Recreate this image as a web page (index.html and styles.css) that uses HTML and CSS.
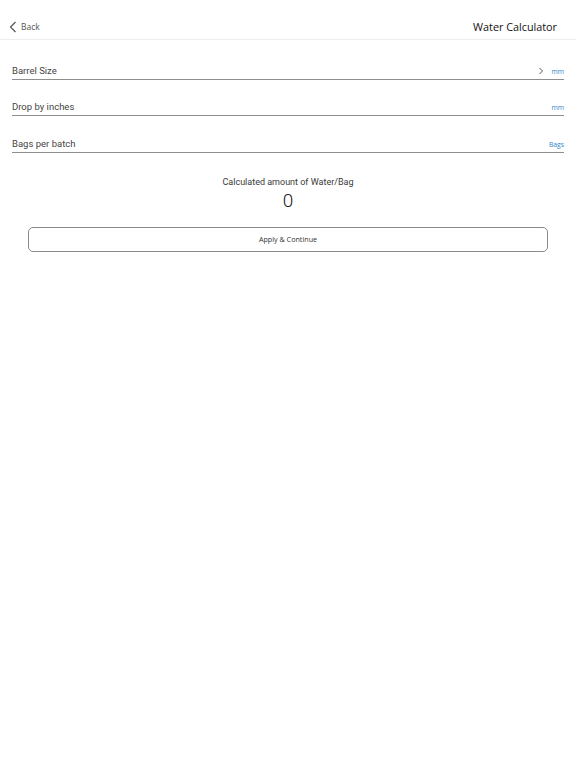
FILE: index.html
```html
<!DOCTYPE html>
<html>
<head>
<meta charset="utf-8">
<link rel="stylesheet" href="styles.css">
</head>
<body>
<header class="nav">
  <div class="back">
    <svg class="chev-left" width="8" height="12" viewBox="0 0 8 12"><path d="M6.5 1 L1.5 6 L6.5 11" fill="none" stroke="#555" stroke-width="1.2"/></svg>
    <span>Back</span>
  </div>
  <div class="title">Water Calculator</div>
</header>
<main class="content">
  <div class="field">
    <span class="label">Barrel Size</span>
    <span class="right">
      <svg class="chev-right" width="6" height="8" viewBox="0 0 6 8"><path d="M1.5 1 L4.5 4 L1.5 7" fill="none" stroke="#444" stroke-width="0.9"/></svg>
      <span class="unit">mm</span>
    </span>
  </div>
  <div class="field">
    <span class="label">Drop by inches</span>
    <span class="right"><span class="unit">mm</span></span>
  </div>
  <div class="field">
    <span class="label">Bags per batch</span>
    <span class="right"><span class="unit">Bags</span></span>
  </div>
  <div class="result">
    <div class="result-label">Calculated amount of Water/Bag</div>
    <div class="result-value">0</div>
  </div>
  <div class="btn-wrap">
    <button class="btn">Apply &amp; Continue</button>
  </div>
</main>
</body>
</html>
```
FILE: styles.css
```css
html, body {
  margin: 0;
  padding: 0;
  background: #fff;
}
body {
  font-family: Roboto, "Noto Sans", sans-serif;
  color: #333;
  width: 576px;
  height: 768px;
}
.nav {
  height: 40px;
  border-bottom: 1px solid #eeeeee;
  display: flex;
  align-items: center;
  justify-content: space-between;
  padding: 14px 19px 0 9px;
  box-sizing: border-box;
}
.back {
  display: flex;
  align-items: center;
  gap: 4px;
  font-family: "Open Sans", sans-serif;
  font-size: 8.5px;
  color: #555;
}
.chev-left {
  display: block;
}
.title {
  font-family: "Open Sans", sans-serif;
  font-size: 10.8px;
  font-weight: 500;
  color: #111;
}
.content {
  padding: 0 12px;
}
.field {
  display: flex;
  justify-content: space-between;
  align-items: flex-end;
  height: 35.5px;
  border-bottom: 1.5px solid #8e8e8e;
  padding-bottom: 3px;
  box-sizing: border-box;
  margin-top: 1px;
}
.field:first-child {
  margin-top: 4px;
}
.label {
  font-size: 9.5px;
  color: #454545;
}
.right {
  display: flex;
  align-items: center;
  gap: 7px;
}
.chev-right {
  display: block;
}
.unit {
  font-family: "Open Sans", sans-serif;
  font-size: 6.8px;
  color: #2f86c8;
}
.result {
  text-align: center;
  margin-top: 24px;
}
.result-label {
  font-size: 9px;
  color: #3a3a3a;
}
.result-value {
  font-size: 19px;
  font-weight: 300;
  color: #222;
  line-height: 22px;
  margin-top: 3px;
}
.btn-wrap {
  padding: 0 16px;
  margin-top: 15px;
}
.btn {
  display: block;
  width: 100%;
  height: 25px;
  border: 1px solid #8a8a8a;
  border-radius: 5px;
  background: #fff;
  font-family: "Open Sans", sans-serif;
  font-size: 7.2px;
  color: #333;
  padding: 0;
}
```
